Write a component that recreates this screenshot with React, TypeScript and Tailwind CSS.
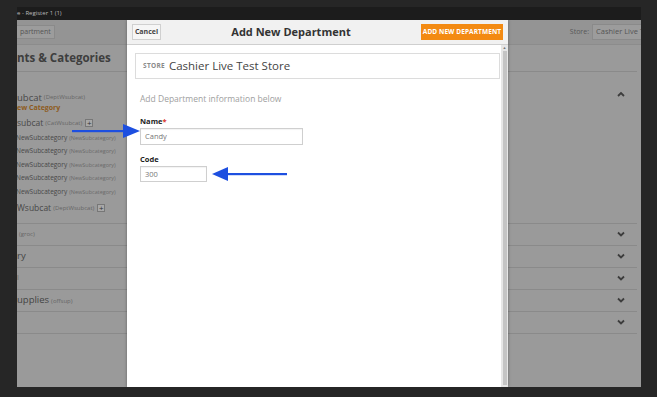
import React from 'react';

const font = { fontFamily: '"Open Sans", "Liberation Sans", sans-serif' };

// --- chevrons used on the dimmed category rows ---
const Chevron: React.FC<{ up?: boolean }> = ({ up }) => (
    <svg width="8" height="6" viewBox="0 0 8 6" className="text-[#3c3c3c]">
        <path d={up ? 'M1 5 L4 2 L7 5' : 'M1 1.5 L4 4.5 L7 1.5'} fill="none" stroke="currentColor" strokeWidth="1.8" />
    </svg>
);

const PlusBox = () => (
    <span className="inline-flex items-center justify-center w-[8px] h-[8px] border border-[#777] bg-[#a8a8a8] text-[8px] leading-none text-[#333] ml-[3px]">+</span>
);

// --- ARROW OVERLAYS ---
const Arrow: React.FC<{ dir: 'left' | 'right'; className: string; width: number }> = ({ dir, className, width }) => (
    <svg className={className} width={width} height="16" viewBox={`0 0 ${width} 16`}>
        {dir === 'right' ? (
            <>
                <rect x="0" y="7" width={width - 16} height="2.2" fill="#1d4fe0" />
                <polygon points={`${width - 18},1 ${width - 1},8 ${width - 18},15`} fill="#1d4fe0" />
            </>
        ) : (
            <>
                <rect x="14" y="7" width={width - 14} height="2.2" fill="#1d4fe0" />
                <polygon points="16,1 0,8 16,15" fill="#1d4fe0" />
            </>
        )}
    </svg>
);

const subRows = [0, 1, 2, 3, 4];
const lowerRows = [
    { main: '', tag: '(groc)', big: false },
    { main: 'ry', tag: '', big: true },
    { main: 'l', tag: '', big: false },
    { main: 'upplies', tag: '(offsup)', big: true },
    { main: '', tag: '', big: false },
];

// --- BACKGROUND APP (dimmed) ---
const BackgroundApp = () => (
    <div className="flex flex-col h-full bg-[#9a9a9a] text-[#444]">
        <div className="h-[25px] shrink-0 bg-[#949494] border-b border-[#8c8c8c] flex items-center justify-between">
            <div className="h-[14px] px-[3px] -ml-[1px] border border-[#8a8a8a] bg-[#9c9c9c] flex items-center text-[7px] text-[#555]">partment</div>
            <div className="flex items-center gap-[3px] -mr-[20px]">
                <span className="text-[7px] text-[#585858]">Store:</span>
                <div className="h-[16px] w-[69px] border border-[#8a8a8a] bg-[#9c9c9c] flex items-center pl-[3px] text-[7.5px] text-[#555] whitespace-nowrap overflow-hidden">Cashier Live Test</div>
            </div>
        </div>
        <div className="flex flex-col pr-[4px]">
            <div className="h-[27px] flex items-center border-b border-[#8a8a8a] text-[11.5px] font-bold text-[#3e3e3e] whitespace-nowrap">nts &amp; Categories</div>
            <div className="pt-[15px] pb-[5px] border-b border-[#8a8a8a] flex">
                <div className="flex-1 flex flex-col">
                    <div className="h-[15px] flex items-end whitespace-nowrap">
                        <span className="text-[9.5px] leading-none text-[#484848]">ubcat</span>
                        <span className="text-[6px] text-[#666] ml-[2px]">(DeptWsubcat)</span>
                    </div>
                    <div className="h-[13px] flex items-center text-[7px] font-bold text-[#8e5a1c]">ew Category</div>
                    <div className="h-[16px] flex items-center whitespace-nowrap">
                        <span className="text-[8.5px] text-[#484848]">subcat</span>
                        <span className="text-[6px] text-[#666] ml-[2px]">(CatWsubcat)</span>
                        <PlusBox />
                    </div>
                    {subRows.map((i) => (
                        <div key={i} className="h-[13.5px] flex items-center whitespace-nowrap -ml-[1px]">
                            <span className="text-[6.5px] text-[#484848]">NewSubcategory</span>
                            <span className="text-[5.5px] text-[#6a6a6a] ml-[2px]">(NewSubcategory)</span>
                        </div>
                    ))}
                    <div className="h-[19px] flex items-center whitespace-nowrap">
                        <span className="text-[8.5px] text-[#484848]">Wsubcat</span>
                        <span className="text-[6px] text-[#666] ml-[2px]">(DeptWsubcat)</span>
                        <PlusBox />
                    </div>
                </div>
                <div className="w-[24px] mr-[4px] pt-[4px] flex justify-center"><Chevron up /></div>
            </div>
            {lowerRows.map((r, i) => (
                <div key={i} className="h-[22px] border-b border-[#8a8a8a] flex items-center justify-between whitespace-nowrap">
                    <div className="flex items-baseline">
                        {r.main && <span className={r.big ? 'text-[9.5px] text-[#444]' : 'text-[7px] text-[#666]'}>{r.main}</span>}
                        {r.tag && <span className="text-[6px] text-[#666] ml-[2px]">{r.tag}</span>}
                    </div>
                    <div className="w-[24px] mr-[4px] flex justify-center"><Chevron /></div>
                </div>
            ))}
        </div>
    </div>
);

// --- MODAL ---
const DepartmentModal = () => (
    <div className="absolute left-[110px] top-0 w-[381px] h-full bg-white flex flex-col shadow-[0_0_3px_rgba(0,0,0,0.35)]">
        <div className="h-[25px] shrink-0 bg-[#f1f1f1] border-b border-[#cfcfcf] flex items-center justify-between px-[5px]">
            <button className="h-[16px] w-[29px] border border-[#d0d0d0] bg-[#f6f6f6] text-[7px] font-bold text-[#444]">Cancel</button>
            <h1 className="text-[11px] font-bold text-[#333]">Add New Department</h1>
            <button className="h-[16px] w-[82px] bg-[#f38a12] text-[6.5px] font-bold text-white tracking-[0.1px]">ADD NEW DEPARTMENT</button>
        </div>
        <div className="flex-1 flex min-h-0">
            <div className="flex-1 flex flex-col pl-[8px] pr-[1px] pt-[8px]">
                <div className="h-[26px] border border-[#dcdcdc] flex items-center pl-[7px] gap-[4px]">
                    <span className="text-[6.5px] font-bold text-[#8a8a8a] tracking-[0.3px]">STORE</span>
                    <span className="text-[11.5px] text-[#444]">Cashier Live Test Store</span>
                </div>
                <div className="pl-[5px] pt-[14px]">
                    <p className="text-[8.5px] text-[#a0a0a0]">Add Department information below</p>
                    <label className="block mt-[10px] text-[7.5px] font-bold text-[#222]">Name<span className="text-[#d9342b]">*</span></label>
                    <div className="mt-[1px] w-[163px] h-[17px] border border-[#cfcfcf] flex items-center pl-[4px] text-[7.5px] text-[#777] shadow-[inset_0_1px_1px_rgba(0,0,0,0.05)]">Candy</div>
                    <label className="block mt-[9px] text-[7.5px] font-bold text-[#222]">Code</label>
                    <div className="mt-[1px] w-[67px] h-[16px] border border-[#cfcfcf] flex items-center pl-[4px] text-[7.5px] text-[#777] shadow-[inset_0_1px_1px_rgba(0,0,0,0.05)]">300</div>
                </div>
            </div>
            <div className="w-[7px] bg-[#e6e6e6] flex flex-col items-center pt-[1px]">
                <div className="text-[4px] leading-none text-[#777]">▲</div>
                <div className="mt-[1px] w-[4px] flex-1 bg-[#c4c4c4] mb-[2px]" />
            </div>
        </div>
    </div>
);

export default function App() {
    return (
        <div className="w-[657px] h-[397px] bg-[#262626] flex flex-col overflow-hidden relative" style={font}>
            <div className="h-[7px] shrink-0 bg-[#262626]" />
            <div className="h-[13px] shrink-0 mx-[17px] w-[624px] bg-[#1c1c1c] flex items-center text-[6px] text-[#b8b8b8]">e - Register 1 (1)</div>
            <div className="ml-[17px] w-[624px] h-[367px] relative overflow-hidden">
                <BackgroundApp />
                <DepartmentModal />
            </div>
            <Arrow dir="right" width={69} className="absolute left-[72px] top-[123px]" />
            <Arrow dir="left" width={75} className="absolute left-[212px] top-[166px]" />
        </div>
    );
}
